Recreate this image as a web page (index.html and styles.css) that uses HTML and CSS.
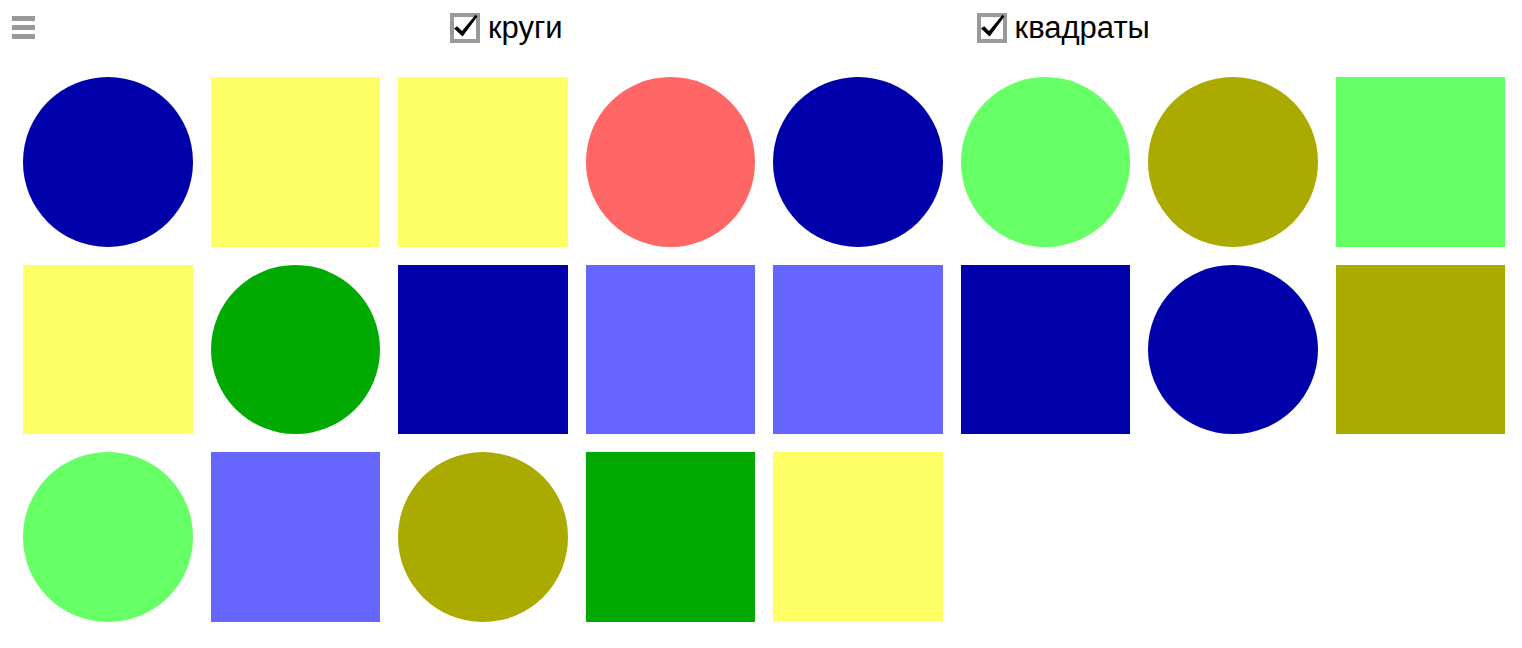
FILE: index.html
```html
<!DOCTYPE html>
<html lang="ru">
<head>
<meta charset="utf-8">
<title>Фигуры</title>
<link rel="stylesheet" href="styles.css">
</head>
<body>
<header class="toolbar">
  <div class="menu" aria-label="меню"><span></span><span></span><span></span></div>
  <label class="opt opt-circles"><span class="box"><svg viewBox="0 0 22 22" width="22" height="22"><path d="M0 11.5 L3.2 9.2 L8 14 L21.6 -2.3 L23.4 -0.6 L8.6 19.6 Z" fill="#000"/></svg></span>круги</label>
  <label class="opt opt-squares"><span class="box"><svg viewBox="0 0 22 22" width="22" height="22"><path d="M0 11.5 L3.2 9.2 L8 14 L21.6 -2.3 L23.4 -0.6 L8.6 19.6 Z" fill="#000"/></svg></span>квадраты</label>
</header>
<main class="grid">
  <div class="shape circle navy"></div>
  <div class="shape yellow"></div>
  <div class="shape yellow"></div>
  <div class="shape circle red"></div>
  <div class="shape circle navy"></div>
  <div class="shape circle lime"></div>
  <div class="shape circle olive"></div>
  <div class="shape lime"></div>

  <div class="shape yellow"></div>
  <div class="shape circle green"></div>
  <div class="shape navy"></div>
  <div class="shape violet"></div>
  <div class="shape violet"></div>
  <div class="shape navy"></div>
  <div class="shape circle navy"></div>
  <div class="shape olive"></div>

  <div class="shape circle lime"></div>
  <div class="shape violet"></div>
  <div class="shape circle olive"></div>
  <div class="shape green"></div>
  <div class="shape yellow"></div>
</main>
</body>
</html>
```
FILE: styles.css
```css
html, body {
  margin: 0;
  padding: 0;
  background: #fff;
  font-family: "Liberation Sans", Arial, sans-serif;
}

.toolbar {
  display: flex;
  align-items: center;
  height: 55px;
  padding-left: 12px;
}

.menu {
  display: flex;
  flex-direction: column;
  gap: 4px;
  width: 23px;
  margin-bottom: 1px;
}

.menu span {
  display: block;
  height: 5px;
  background: #999;
}

.opt {
  display: flex;
  align-items: center;
  gap: 8px;
  font-size: 31px;
  line-height: 31px;
  color: #000;
}

.opt-circles {
  margin-left: 415px;
}

.opt-squares {
  margin-left: 414px;
}

.box {
  display: block;
  width: 22px;
  height: 22px;
  border: 4px solid #999;
  background: #fff;
}

.box svg {
  display: block;
  overflow: visible;
}

.grid {
  display: grid;
  grid-template-columns: repeat(8, 1fr);
  gap: 18px;
  width: 1482px;
  margin: 22px 0 0 23px;
}

.shape {
  aspect-ratio: 1 / 1;
}

.circle {
  border-radius: 50%;
}

.navy { background: #0000aa; }
.yellow { background: #ffff66; }
.red { background: #ff6666; }
.lime { background: #66ff66; }
.olive { background: #aaaa00; }
.green { background: #00aa00; }
.violet { background: #6666ff; }
```
